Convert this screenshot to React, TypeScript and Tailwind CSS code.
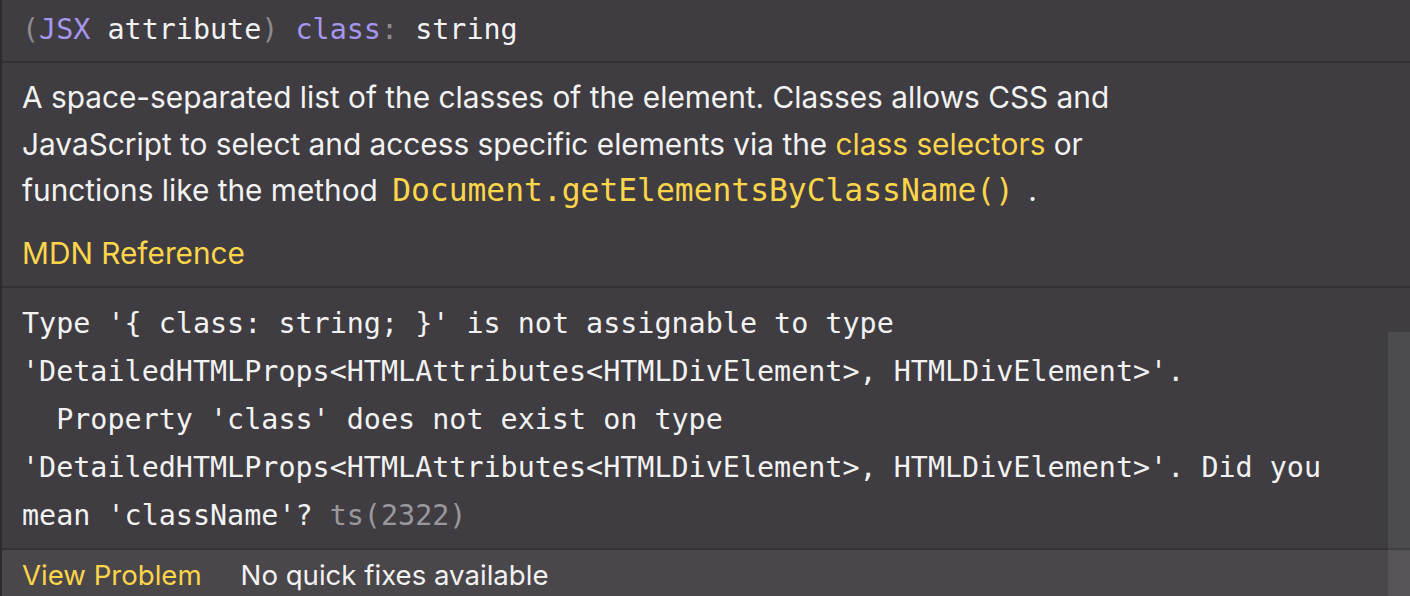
import React from 'react';

const mono = "font-['DejaVu_Sans_Mono','Liberation_Mono',monospace]";

const App = () => {
  return (
    <div className="relative w-[1410px] h-[596px] overflow-hidden bg-[#3f3d41] border-l-2 border-[#2c2b2e] text-[#f2f2f2] font-['Inter','Noto_Sans',sans-serif]">
      {/* signature */}
      <div className={`h-[63px] flex items-center px-[20px] border-b-2 border-[#343236] text-[28.4px] ${mono}`}>
        <span className="text-[#8d8b8f]">(</span>
        <span className="text-[#a596ee]">JSX</span>
        <span className="whitespace-pre"> attribute</span>
        <span className="text-[#8d8b8f]">)</span>
        <span className="whitespace-pre"> </span>
        <span className="text-[#a596ee]">class</span>
        <span className="text-[#8d8b8f]">:</span>
        <span className="whitespace-pre"> string</span>
      </div>

      {/* docs */}
      <div className="h-[225px] px-[20px] pt-[11px] border-b-2 border-[#343236] text-[29.8px] leading-[46.5px]">
        <p>
          A space-separated list of the classes of the element. Classes allows CSS and
          <br />
          JavaScript to select and access specific elements via the{' '}
          <span className="text-[#fdd54a]">class selectors</span> or
          <br />
          functions like the method{' '}
          <span className={`mx-[6px] text-[31.3px] text-[#fdd54a] ${mono}`}>Document.getElementsByClassName()</span>{' '}.
        </p>
        <p className="mt-[16px] text-[#fdd54a]">MDN Reference</p>
      </div>

      {/* error */}
      <div className={`h-[260px] px-[20px] pt-[12px] text-[28.4px] leading-[48px] whitespace-pre ${mono}`}>
        <div>Type '{'{'} class: string; {'}'}' is not assignable to type</div>
        <div>'DetailedHTMLProps&lt;HTMLAttributes&lt;HTMLDivElement&gt;, HTMLDivElement&gt;'.</div>
        <div>  Property 'class' does not exist on type</div>
        <div>'DetailedHTMLProps&lt;HTMLAttributes&lt;HTMLDivElement&gt;, HTMLDivElement&gt;'. Did you</div>
        <div>
          mean 'className'? <span className="text-[#9a989c]">ts(2322)</span>
        </div>
      </div>

      {/* status bar */}
      <div className="h-[48px] flex items-center gap-[39px] px-[20px] pt-[6px] bg-[#4a474b] border-t-2 border-[#343236] text-[27.6px]">
        <span className="text-[#fdd54a]">View Problem</span>
        <span>No quick fixes available</span>
      </div>

      {/* scrollbar */}
      <div className="absolute right-0 top-[332px] bottom-0 w-[22px] bg-[#ffffff]/[0.07]" />
    </div>
  );
};

export default App;
